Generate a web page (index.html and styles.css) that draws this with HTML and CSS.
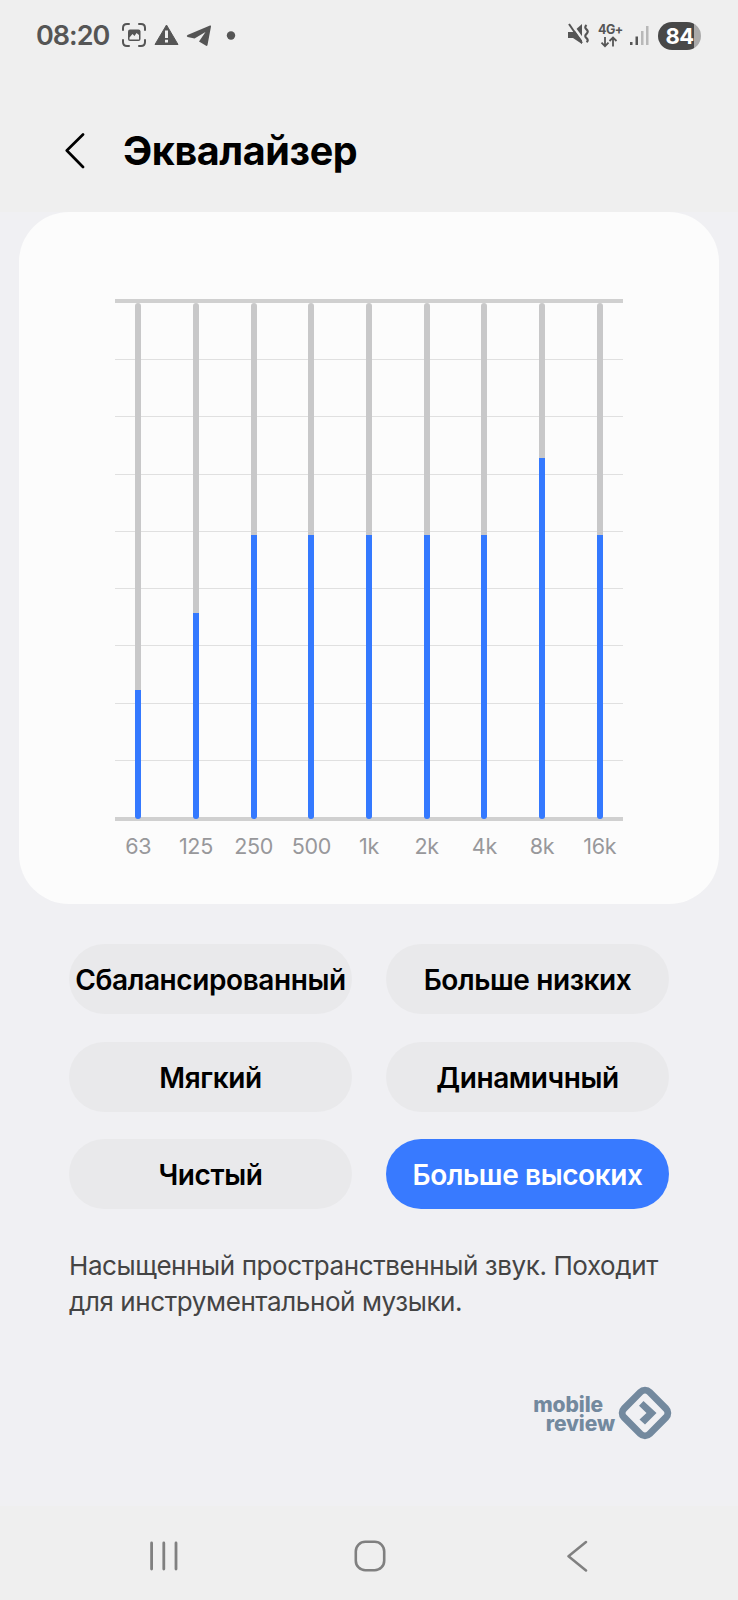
FILE: index.html
```html
<!DOCTYPE html>
<html lang="ru">
<head>
    <meta charset="UTF-8">
    <title>Эквалайзер</title>
    <link rel="stylesheet" href="styles.css">
</head>
<body>
<div class="top">
    <div class="status">
        <span class="time">08:20</span>
        <svg class="status-left" width="120" height="30" viewBox="0 0 120 30">
            <g fill="none" stroke="#555" stroke-width="2" stroke-linecap="round">
                <path d="M1 9V7q0-4 4-4h2M17 3h2q4 0 4 4v2M23 19v2q0 4-4 4h-2M7 25H5q-4 0-4-4v-2"/>
            </g>
            <rect x="6" y="8.500" width="12.500" height="11.500" rx="2" fill="#555"/>
            <path d="M7.500 16.500l3-3.500 2 2 2-3 2.500 2v4.500H7.500z" fill="#efefef"/>
            <path d="M44.500 4L56 23.500H33z" fill="#555" stroke="#555" stroke-width="1" stroke-linejoin="round"/>
            <path d="M43 9.500h3v7.500h-3zM43 18.700h3v2.800h-3z" fill="#efefef"/>
            <path d="M65.500 14L88 4.500q1.200-.4 1 1l-3.500 18.500q-.4 1.500-1.800.6L77 20.500 83.500 11 72.500 17.500l-7-1.600q-1.500-.9 0-1.900z" fill="#555"/>
            <circle cx="109" cy="14.500" r="4.200" fill="#555"/>
        </svg>
        <svg class="status-right" width="90" height="36" viewBox="0 0 90 36">
            <path d="M1 14h5l9-8v20l-9-6H1z" fill="#555"/>
            <path d="M3 4l14 19" stroke="#efefef" stroke-width="2.500"/>
            <path d="M2 6l13 19" stroke="#555" stroke-width="2"/>
            <path d="M19.500 7q-2.500 2.200 0 4.400t0 4.400 0 4.400 0 4" fill="none" stroke="#555" stroke-width="2.200"/>
            <text class="net" x="31" y="16">4G+</text>
            <path d="M38 19v9M34.500 24.700l3.500 3.500 3.500-3.500M46 28.500v-9M42.500 23l3.500-3.500 3.500 3.500" fill="none" stroke="#555" stroke-width="1.800"/>
            <g fill="#555">
                <rect x="63" y="24" width="2.500" height="3"/>
                <rect x="68.500" y="18.500" width="2.500" height="8.500"/>
            </g>
            <g fill="#b8b8b8">
                <rect x="74" y="13" width="2.500" height="14"/>
                <rect x="79" y="8" width="2.500" height="19"/>
            </g>
        </svg>
        <span class="battery">84</span>
    </div>
    <div class="header">
        <svg width="20" height="36" viewBox="0 0 20 36">
            <path d="M18 1.500L1.800 17.500 18 34" fill="none" stroke="#000" stroke-width="2.700" stroke-linecap="round" stroke-linejoin="round"/>
        </svg>
        <h1>Эквалайзер</h1>
    </div>
</div>

<div class="card">
    <div class="chart">
        <div class="lines">
            <i></i><i></i><i></i><i></i><i></i><i></i><i></i><i></i><i></i>
        </div>
        <div class="bars">
            <div class="bar"><b style="height: 25%"></b></div>
            <div class="bar"><b style="height: 40%"></b></div>
            <div class="bar"><b style="height: 55%"></b></div>
            <div class="bar"><b style="height: 55%"></b></div>
            <div class="bar"><b style="height: 55%"></b></div>
            <div class="bar"><b style="height: 55%"></b></div>
            <div class="bar"><b style="height: 55%"></b></div>
            <div class="bar"><b style="height: 70%"></b></div>
            <div class="bar"><b style="height: 55%"></b></div>
        </div>
    </div>
    <div class="labels">
        <span>63</span>
        <span>125</span>
        <span>250</span>
        <span>500</span>
        <span>1k</span>
        <span>2k</span>
        <span>4k</span>
        <span>8k</span>
        <span>16k</span>
    </div>
</div>

<div class="presets">
    <div class="preset">Сбалансированный</div>
    <div class="preset">Больше низких</div>
    <div class="preset">Мягкий</div>
    <div class="preset">Динамичный</div>
    <div class="preset">Чистый</div>
    <div class="preset active">Больше высоких</div>
</div>
<p class="desc">Насыщенный пространственный звук. Походит<br>для инструментальной музыки.</p>

<div class="logo">
    <div class="logo-text"><span>mobile</span><span>review</span></div>
    <svg width="54" height="54" viewBox="0 0 54 54">
        <rect x="9" y="9" width="36" height="36" rx="6.500" transform="rotate(45 27 27)" fill="none" stroke="#73899e" stroke-width="7"/>
        <path d="M25.500 15L38.500 27 27 38.500 21.500 33.500 28.500 27 21 19.800z" fill="#73899e"/>
    </svg>
</div>

<div class="nav">
    <svg width="30" height="32" viewBox="0 0 30 32">
        <path d="M3.600 3v26M15.800 3v26M28 3v26" stroke="#808080" stroke-width="2.800" stroke-linecap="round"/>
    </svg>
    <svg class="home" width="32" height="32" viewBox="0 0 32 32">
        <rect x="1.800" y="1.800" width="28.400" height="28.400" rx="9.500" fill="none" stroke="#808080" stroke-width="2.600"/>
    </svg>
    <svg width="22" height="32" viewBox="0 0 22 32">
        <path d="M19 2L1.500 16.200 19 30.500" fill="none" stroke="#808080" stroke-width="2.500" stroke-linecap="round" stroke-linejoin="round"/>
    </svg>
</div>
</body>
</html>
```
FILE: styles.css
```css
*{margin: 0;padding: 0;box-sizing: border-box;}

body{
    width: 738px;
    height: 1600px;
    display: flex;
    flex-direction: column;
    overflow: hidden;
    background: #f0f0f3;
    font-family: Inter, "Noto Sans", sans-serif;
}
svg{
    display: block;
    flex: none;
}

/* status bar + title */
.top{
    height: 212px;
    background: #efefef;
}
.status{
    height: 72px;
    display: flex;
    align-items: center;
    padding: 0 37px 0 36px;
    color: #555;
}
.time{
    width: 86px;
    font-size: 27px;
    font-weight: 600;
    line-height: 30px;
    letter-spacing: -1px;
}
.status-right{
    margin-left: auto;
}
.net{
    font-size: 12.5px;
    font-weight: 700;
    letter-spacing: -0.5px;
    fill: #555;
}
.battery{
    width: 43px;
    height: 28px;
    margin-left: 1px;
    border-radius: 14px;
    background: linear-gradient(to right, #484848 36px, #aaa 36px);
    color: #fff;
    font-size: 22px;
    font-weight: 700;
    line-height: 28px;
    letter-spacing: -0.6px;
    text-align: center;
}
.header{
    height: 157px;
    display: flex;
    align-items: center;
    padding-left: 65px;
}
.header h1{
    margin-left: 38px;
    font-size: 39.5px;
    font-weight: 700;
    line-height: 50px;
    letter-spacing: -0.4px;
}

/* chart */
.card{
    height: 692px;
    margin: 0 19px;
    padding: 87px 90px 0;
    background: #fcfcfc;
    border-radius: 50px;
}
.chart{
    display: grid;
    grid-template-columns: 508px;
    height: 522px;
    margin-left: 6px;
}
.lines, .bars{
    grid-area: 1 / 1;
}
.lines{
    display: flex;
    flex-direction: column;
    border-top: 4px solid #d0d0d0;
}
.lines i{
    flex: 1;
    border-bottom: 1px solid #e0e0e0;
}
.lines i:last-child{
    flex: 1 0 3px;
    border-bottom: 4px solid #d0d0d0;
}
.bars{
    display: grid;
    grid-template-columns: repeat(9, 57.7px);
    justify-content: center;
    justify-items: center;
    padding: 4px 0 2px;
}
.bar{
    width: 6px;
    display: flex;
    align-items: flex-end;
    background: #c8c8c9;
    border-radius: 3px;
    overflow: hidden;
}
.bar b{
    width: 100%;
    background: #3479ff;
}
.labels{
    display: grid;
    grid-template-columns: repeat(9, 57.7px);
    justify-content: center;
    margin-top: 10px;
    color: #98989b;
    font-size: 21.5px;
    line-height: 30px;
    letter-spacing: -0.3px;
    text-align: center;
}

/* presets */
.presets{
    display: grid;
    grid-template-columns: 283px 283px;
    grid-auto-rows: 70px;
    gap: 27.7px 34px;
    margin: 40px 69px 0;
}
.preset{
    border-radius: 35px;
    background: #e9e9eb;
    font-size: 28px;
    font-weight: 600;
    line-height: 72px;
    letter-spacing: -0.4px;
    text-align: center;
    white-space: nowrap;
}
.preset.active{
    background: #387aff;
    color: #fff;
}
.desc{
    margin: 39px 0 0 69px;
    color: #444;
    font-size: 26px;
    line-height: 36px;
    letter-spacing: -0.41px;
    white-space: nowrap;
}

.logo{
    display: flex;
    justify-content: flex-end;
    margin: 66px 66px 0 0;
    color: #73899e;
}
.logo-text{
    display: flex;
    flex-direction: column;
    align-items: flex-end;
    padding-top: 10px;
    margin-right: 3px;
    font-size: 21px;
    font-weight: 800;
    line-height: 18.5px;
    letter-spacing: -0.1px;
}
.logo-text span:first-child{
    margin-right: 12px;
}

.nav{
    height: 94px;
    margin-top: auto;
    padding: 5px 149px 0 148px;
    display: flex;
    justify-content: space-between;
    align-items: center;
    background: #efefef;
}
.home{
    margin-right: 5px;
}
```
